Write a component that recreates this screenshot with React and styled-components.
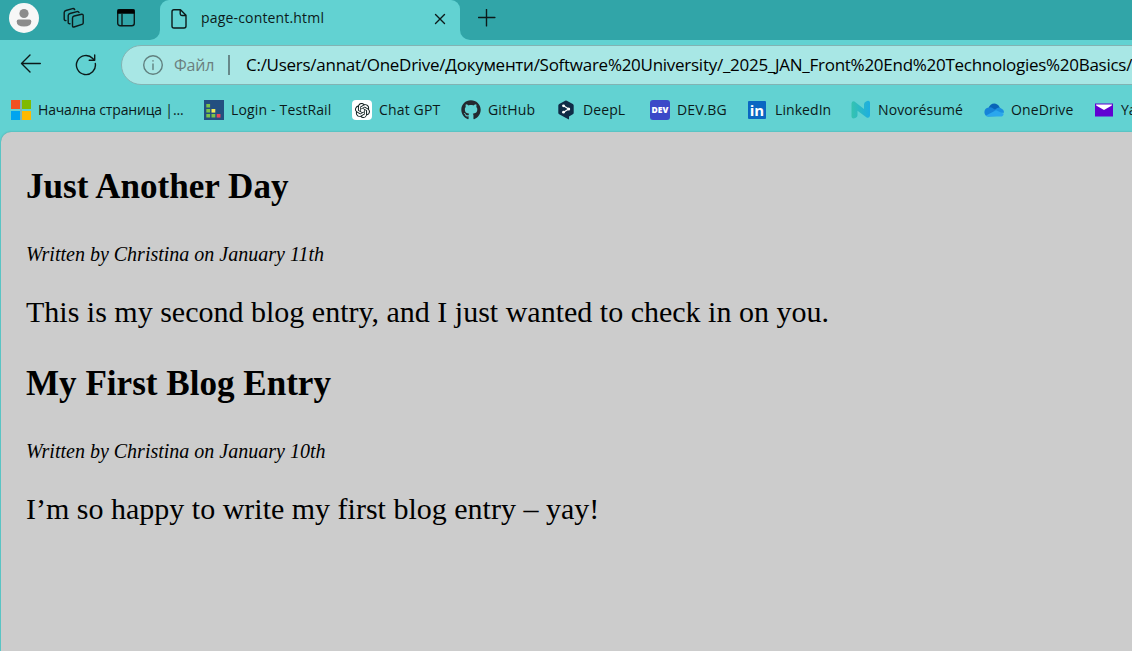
import React from 'react';
import styled, { createGlobalStyle } from 'styled-components';
import { SiOpenai } from 'react-icons/si';
import { FaGithub } from 'react-icons/fa';

const GlobalStyle = createGlobalStyle`
  *, *::before, *::after { box-sizing: border-box; }
  body { margin: 0; background: #62d2d2; overflow: hidden; }
`;

const Browser = styled.div`
  width: 100vw;
  height: 100vh;
  overflow: hidden;
  display: flex;
  flex-direction: column;
  background: #62d2d2;
  color: #0c1a1a;
  font-family: 'Open Sans', 'Noto Sans', sans-serif;
`;

const TabStrip = styled.div`
  display: flex;
  height: 40px;
  flex: none;
  background: #62d2d2;
`;

const StripStart = styled.div`
  display: flex;
  align-items: center;
  width: 160px;
  padding: 0 0 4px 9px;
  background: #31a5a8;
  border-bottom-right-radius: 10px;
`;

const StripEnd = styled.div`
  flex: 1;
  display: flex;
  padding: 9px 0 0 18px;
  background: #31a5a8;
  border-bottom-left-radius: 10px;
`;

const TabBack = styled.div`
  width: 300px;
  background: linear-gradient(#31a5a8 12px, #62d2d2 12px);
`;

const Tab = styled.div`
  display: flex;
  align-items: center;
  height: 40px;
  padding: 0 13px 4px 10px;
  background: #62d2d2;
  border-radius: 9px 9px 0 0;
`;

const TabTitle = styled.span`
  flex: 1;
  margin-left: 13px;
  font-size: 14px;
  line-height: 20px;
  letter-spacing: 0.17px;
  white-space: nowrap;
`;

const Avatar = styled.svg`
  display: block;
  width: 30px;
  height: 30px;
  margin-right: 24px;
`;

const Glyph = styled.svg`
  display: block;
  flex: none;
  width: ${p => p.$w}px;
  height: ${p => p.$h || p.$w}px;
  margin: ${p => p.$m || 0};
  fill: none;
  stroke: ${p => p.$color || '#0c1a1a'};
  stroke-width: 1.4;
  stroke-linecap: round;
  stroke-linejoin: round;
`;

const Toolbar = styled.div`
  display: flex;
  align-items: center;
  flex: none;
  height: 50px;
  padding-left: 20px;
`;

const AddressBar = styled.div`
  display: flex;
  align-items: center;
  flex: none;
  width: 1100px;
  height: 40px;
  margin-left: 24px;
  padding-left: 21px;
  background: #a8e7e5;
  border: 1px solid #82b3b3;
  border-radius: 20px;
  white-space: nowrap;
`;

const Scheme = styled.span`
  width: 44px;
  margin-left: 11px;
  font-size: 16px;
  line-height: 22px;
  letter-spacing: -0.2px;
  color: #6b7f7e;
`;

const Divider = styled.span`
  width: 2px;
  height: 20px;
  margin: 0 16px 0 10px;
  background: #67898a;
`;

const Url = styled.span`
  font-size: 17px;
  line-height: 22px;
  letter-spacing: -0.27px;
  color: #000;
`;

const Bookmarks = styled.div`
  display: flex;
  flex: none;
  height: 42px;
  padding-left: 11px;
`;

const Bookmark = styled.div`
  display: flex;
  align-items: center;
  flex: none;
  gap: 7px;
  width: ${p => p.$w}px;
  height: 40px;
  font-size: 14px;
  white-space: nowrap;
  letter-spacing: ${p => p.$spacing}px;

  svg { display: block; flex: none; width: 20px; height: 20px; }
`;

const BookmarkLabel = styled.span`
  padding-bottom: 2px;
`;

const GptTile = styled.span`
  display: grid;
  place-items: center;
  width: 20px;
  height: 20px;
  border-radius: 4px;
  background: #fff;

  svg { width: 15px; height: 15px; }
`;

const DevTile = styled.span`
  display: grid;
  place-items: center;
  width: 20px;
  height: 20px;
  border-radius: 3px;
  background: #3b49c8;
  color: #fff;
  font: 800 8.5px/20px 'Open Sans', sans-serif;
  letter-spacing: 0;
`;

const LinkedInTile = styled(DevTile)`
  width: 18px;
  height: 18px;
  margin-right: 2px;
  border-radius: 1px;
  background: #0a66c2;
  font: 700 15px/17px 'Open Sans', sans-serif;
`;

const Page = styled.main`
  flex: 1;
  margin-left: 1px;
  padding: 32px 25px;
  background: #ccc;
  border-radius: 10px 0 0 0;
  box-shadow: 0 0 2px rgba(0, 60, 60, 0.35);
  font-family: 'Liberation Serif', 'Times New Roman', serif;
  color: #000;
`;

const Entry = styled.article`
  height: 197px;
`;

const EntryTitle = styled.h2`
  margin: 0 0 33px;
  font-size: 35.1px;
  line-height: 46px;
`;

const Byline = styled.p`
  margin: 0 0 29px;
  font-size: 20px;
  font-style: italic;
  line-height: 22px;
`;

const EntryText = styled.p`
  margin: 0;
  font-size: 30px;
  line-height: 36px;
`;

const MicrosoftIcon = () => (
  <svg viewBox="0 0 20 20">
    <path fill="#8baaaa" d="M9 0h2v20H9z" opacity=".7" />
    <path fill="#f25022" d="M0 0h9v9H0z" />
    <path fill="#7fba00" d="M11 0h9v9h-9z" />
    <path fill="#00a4ef" d="M0 11h9v9H0z" />
    <path fill="#ffb900" d="M11 11h9v9h-9z" />
  </svg>
);

const TestRailIcon = () => (
  <svg viewBox="0 0 20 20">
    <path fill="#234f80" d="M0 0h20v20H0z" />
    <path fill="#7bc34a" d="M2.3 4h3.8v3.6H2.3zM2.3 9h3.8v3.6H2.3zM2.3 14h3.8v3.6H2.3zM7.5 14h3.8v3.6H7.5z" />
    <path fill="#f5ec5a" d="M7.500 9h3.800v3.600H7.500z" />
    <path fill="#e9445c" d="M12.700 14h3.800v3.600h-3.800z" />
  </svg>
);

const DeepLIcon = () => (
  <svg viewBox="0 0 20 20">
    <path fill="#0f2b46" d="M9.200.7q.8-.5 1.600 0l6 3.400q.9.500.9 1.500v7.200q0 1-.9 1.500L13 16.500v3L10 18l-6.800-3.700q-.9-.5-.9-1.500V5.600q0-1 .9-1.500z" />
    <path d="M7.500 5.800 12.700 9 7.500 12.200" fill="none" stroke="#fff" strokeWidth="1.200" />
    <g fill="#fff"><circle cx="7.500" cy="5.800" r="1.400" /><circle cx="12.700" cy="9" r="1.500" /><circle cx="7.500" cy="12.200" r="1.400" /></g>
  </svg>
);

const NovoIcon = () => (
  <svg viewBox="0 0 20 20">
    <defs>
      <linearGradient id="novo"><stop stopColor="#35c3b0" /><stop offset="1" stopColor="#1eaee0" /></linearGradient>
    </defs>
    <path fill="url(#novo)" d="M.5 3.500Q.8.800 3.500 1.500L13 9V4q.2-2 3-3 2.800-.8 3 1.500v13q-.4 3-3.400 2L6.500 10.800V15q0 2.500-3 3.300-3 .5-3-1.800z" />
  </svg>
);

const OneDriveIcon = () => (
  <svg viewBox="0 0 20 20">
    <path fill="#0864b8" d="M4.500 8.200C6 2.500 13 1.500 15.600 7.200L16 11H7z" />
    <path fill="#1683d8" d="M4.500 16.500C-.8 16.500-1.200 8 4.800 7.500q3-.6 5.200 1.500l6 3-3 4z" />
    <path fill="#1a90e0" d="m10 10.500 3.200-2.500q2-1.200 4 .4 2.800 1 2.800 4.300L15 13z" />
    <path fill="#2aa7ee" d="M2 15.500 12 10.300l7.800 3.400q-.7 2.900-3.300 2.900h-12q-1.500 0-2.500-1.100z" />
  </svg>
);

const MailIcon = () => (
  <svg viewBox="0 0 20 20">
    <path fill="#6001d2" d="M1 3.500h18v13H1z" />
    <path fill="#fff" d="M2 4.500h16q0 1-1 1.600L10 10 3 6.100Q2 5.500 2 4.500z" />
  </svg>
);

const bookmarks = [
  { label: 'Начална страница |...', w: 193, spacing: -0.17, icon: <MicrosoftIcon /> },
  { label: 'Login - TestRail', w: 148, spacing: 0.16, icon: <TestRailIcon /> },
  { label: 'Chat GPT', w: 109, spacing: 0.16, icon: <GptTile><SiOpenai /></GptTile> },
  { label: 'GitHub', w: 95, spacing: 0.16, icon: <FaGithub color="#24292f" /> },
  { label: 'DeepL', w: 94, spacing: 0.1, icon: <DeepLIcon /> },
  { label: 'DEV.BG', w: 98, spacing: 0.1, icon: <DevTile>DEV</DevTile> },
  { label: 'LinkedIn', w: 103, spacing: 0.07, icon: <LinkedInTile>in</LinkedInTile> },
  { label: 'Novorésumé', w: 133, spacing: 0.1, icon: <NovoIcon /> },
  { label: 'OneDrive', w: 110, spacing: 0.1, icon: <OneDriveIcon /> },
  { label: 'Yahoo', w: 100, spacing: -0.1, icon: <MailIcon /> },
];

const entries = [
  {
    title: 'Just Another Day',
    byline: 'Written by Christina on January 11th',
    text: 'This is my second blog entry, and I just wanted to check in on you.',
  },
  {
    title: 'My First Blog Entry',
    byline: 'Written by Christina on January 10th',
    text: 'I’m so happy to write my first blog entry – yay!',
  },
];

export default function App() {
  return (
    <Browser>
      <GlobalStyle />
      <TabStrip>
        <StripStart>
          <Avatar viewBox="0 0 30 30">
            <circle cx="15" cy="15" r="15" fill="#f7f7f7" />
            <circle cx="15" cy="10.500" r="4.600" fill="#8b8b8b" />
            <path d="M9.500 16.500h11q1.800 0 1.800 2 0 5-7.300 5t-7.300-5q0-2 1.800-2z" fill="#8b8b8b" />
          </Avatar>
          <Glyph $w={22} $m="0 31px 0 0" viewBox="0 0 22 22">
            <path d="m11.200 9 7.500-1.700q1.500-.2 1.500 1.200v7.500q0 1-1.200 1.400L11 20q-1.500.3-1.500-1.200V11q0-1.500 1.700-2z" />
            <path d="M7 16.800q-1.800.2-1.800-1.400V8.500q0-1.500 1.800-2l7-1.900q1.500-.3 2 1M3 13.600q-1.800 0-1.800-1.600V5.500q0-1.500 1.800-2L9.500 1.600q1.500-.3 2.200 1" />
          </Glyph>
          <Glyph $w={20} viewBox="0 0 20 20">
            <rect x="1.700" y="1.800" width="16.600" height="16" rx="2.500" />
            <path d="M2 2h16v3H2z" fill="#000" stroke="#000" />
            <path d="M6 6v11.500" />
          </Glyph>
        </StripStart>
        <TabBack>
          <Tab>
            <Glyph $w={18} $h={22} $m="2px 0 0 0" viewBox="0 0 18 22">
              <path d="M4 1.700h6.500l5.500 5.600V18q0 2-2 2H4q-2 0-2-2V3.700q0-2 2-2zM10.200 2v3.800q0 1.700 1.700 1.700h4" />
            </Glyph>
            <TabTitle>page-content.html</TabTitle>
            <Glyph $w={14} $m="2px 0 0" viewBox="0 0 14 14"><path d="m2.500 2.500 9 9m0-9-9 9" /></Glyph>
          </Tab>
        </TabBack>
        <StripEnd>
          <Glyph $w={18} viewBox="0 0 18 18"><path d="M8.500.5v16.400M.5 8.500h16.400" /></Glyph>
        </StripEnd>
      </TabStrip>
      <Toolbar>
        <Glyph $w={22} $m="0 33px 2px 0" viewBox="0 0 22 22"><path d="M20.300 10.500H1.500M10 2 1.500 10.500l8.500 8.500" /></Glyph>
        <Glyph $w={22} $m="0 0 1px 0" viewBox="0 0 22 22"><path d="M20.300 9.500A9.500 9.500 0 1 1 17.800 4.500L19.500 6M19.700 1v5.200h-5.500" /></Glyph>
        <AddressBar>
          <Glyph $w={20} $color="#61807f" viewBox="0 0 20 20">
            <circle cx="10" cy="10" r="9.300" />
            <path d="M10 9v5.500M10 5.800v.2" />
          </Glyph>
          <Scheme>Файл</Scheme>
          <Divider />
          <Url>C:/Users/annat/OneDrive/Документи/Software%20University/_2025_JAN_Front%20End%20Technologies%20Basics/</Url>
        </AddressBar>
      </Toolbar>
      <Bookmarks>
        {bookmarks.map(b => (
          <Bookmark key={b.label} $w={b.w} $spacing={b.spacing}>
            {b.icon}
            <BookmarkLabel>{b.label}</BookmarkLabel>
          </Bookmark>
        ))}
      </Bookmarks>
      <Page>
        {entries.map(e => (
          <Entry key={e.title}>
            <EntryTitle>{e.title}</EntryTitle>
            <Byline>{e.byline}</Byline>
            <EntryText>{e.text}</EntryText>
          </Entry>
        ))}
      </Page>
    </Browser>
  );
}
